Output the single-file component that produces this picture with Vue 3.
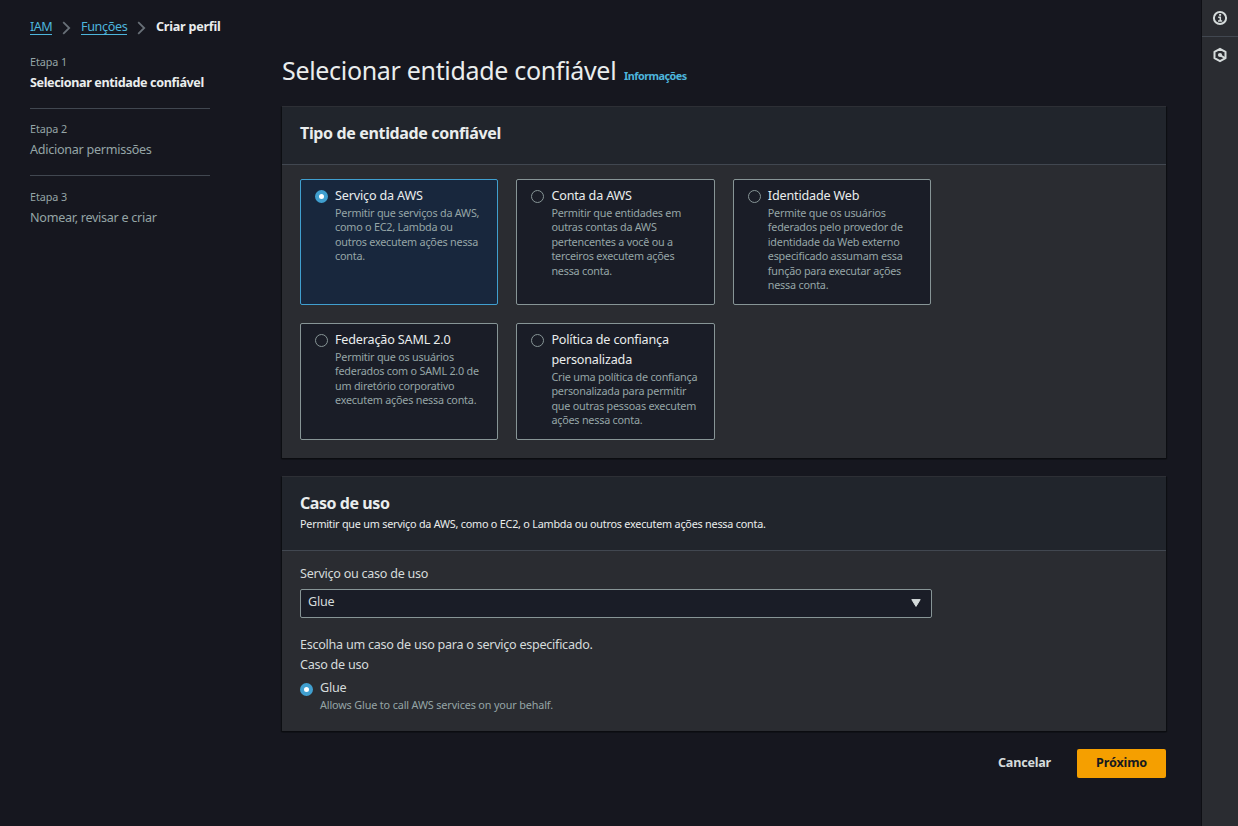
<script setup>
import { ref } from 'vue'

const steps = [
  { n: 'Etapa 1', title: 'Selecionar entidade confiável', active: true },
  { n: 'Etapa 2', title: 'Adicionar permissões' },
  { n: 'Etapa 3', title: 'Nomear, revisar e criar' }
]
const selected = ref(0)
const tiles = [
  { title: ['Serviço da AWS'], lines: ['Permitir que serviços da AWS,', 'como o EC2, Lambda ou', 'outros executem ações nessa', 'conta.'] },
  { title: ['Conta da AWS'], lines: ['Permitir que entidades em', 'outras contas da AWS', 'pertencentes a você ou a', 'terceiros executem ações', 'nessa conta.'] },
  { title: ['Identidade Web'], lines: ['Permite que os usuários', 'federados pelo provedor de', 'identidade da Web externo', 'especificado assumam essa', 'função para executar ações', 'nessa conta.'] },
  { title: ['Federação SAML 2.0'], lines: ['Permitir que os usuários', 'federados com o SAML 2.0 de', 'um diretório corporativo', 'executem ações nessa conta.'] },
  { title: ['Política de confiança', 'personalizada'], lines: ['Crie uma política de confiança', 'personalizada para permitir', 'que outras pessoas executem', 'ações nessa conta.'] }
]
</script>

<template>
  <div class="page">
    <div class="left">
      <nav class="crumbs">
        <a class="iam">IAM</a>
        <svg class="chev" width="10" height="14" viewBox="0 0 10 14"><path d="M1.2 1.2 L7.2 7 L1.2 12.8" /></svg>
        <a class="func">Funções</a>
        <svg class="chev" width="10" height="14" viewBox="0 0 10 14"><path d="M1.2 1.2 L7.2 7 L1.2 12.8" /></svg>
        <b>Criar perfil</b>
      </nav>
      <ol class="steps">
        <li v-for="s in steps" :key="s.n" :class="{ active: s.active }">
          <small>{{ s.n }}</small>
          <span>{{ s.title }}</span>
        </li>
      </ol>
    </div>

    <main class="main">
      <header class="title">
        <h1>Selecionar entidade confiável</h1>
        <a class="info">Informações</a>
      </header>

      <section class="box first">
        <div class="head"><h2>Tipo de entidade confiável</h2></div>
        <div class="tiles">
          <div v-for="(t, i) in tiles" :key="i" class="tile" :class="{ on: selected === i }" @click="selected = i">
            <i class="radio" :class="{ checked: selected === i }"></i>
            <div>
              <div v-for="l in t.title" :key="l" class="tt">{{ l }}</div>
              <div v-for="l in t.lines" :key="l" class="td">{{ l }}</div>
            </div>
          </div>
        </div>
      </section>

      <section class="box second">
        <div class="head">
          <h2 class="use">Caso de uso</h2>
          <p class="sub">Permitir que um serviço da AWS, como o EC2, o Lambda ou outros executem ações nessa conta.</p>
        </div>
        <div class="form">
          <div class="txt">Serviço ou caso de uso</div>
          <div class="select">
            <span>Glue</span>
            <svg width="10" height="8" viewBox="0 0 10 8"><path d="M0.8 0.6 H9.2 L5 7.4 Z" fill="#d5dbdb" stroke="#d5dbdb" stroke-linejoin="round" /></svg>
          </div>
          <div class="txt choose">Escolha um caso de uso para o serviço especificado.</div>
          <div class="txt">Caso de uso</div>
          <div class="option">
            <i class="radio checked"></i>
            <div>
              <div class="txt">Glue</div>
              <div class="od">Allows Glue to call AWS services on your behalf.</div>
            </div>
          </div>
        </div>
      </section>

      <footer class="actions">
        <button class="cancel">Cancelar</button>
        <button class="next">Próximo</button>
      </footer>
    </main>

    <aside class="rail">
      <div class="cell">
        <svg width="16" height="16" viewBox="0 0 16 16" fill="none" stroke="#d5dbdb">
          <circle cx="8" cy="8" r="6.1" stroke-width="2" />
          <path d="M6.2 7.2 H8.3 V11 M6 11.1 H10.2" stroke-width="1.5" />
          <rect x="7.1" y="4" width="2" height="1.8" fill="#d5dbdb" stroke="none" />
        </svg>
      </div>
      <div class="cell second-cell">
        <svg width="16" height="16" viewBox="0 0 16 16" fill="none" stroke="#d5dbdb">
          <path d="M8 1.8 L13.5 4.8 V11.2 L8 14.2 L2.5 11.2 V4.8 Z" stroke-width="2" stroke-linejoin="round" />
          <circle cx="8" cy="8" r="2.1" fill="#d5dbdb" stroke="none" />
          <path d="M8.3 8.3 L13 11" stroke-width="2" />
        </svg>
      </div>
    </aside>
  </div>
</template>

<style>
body { background: #16171f; }
</style>

<style scoped>
* { box-sizing: border-box; }
.page {
  display: grid;
  grid-template-columns: 282px 884px 35px 37px;
  height: 826px;
  overflow: hidden;
  background: #16171f;
  color: #d5dbdb;
  font: 12.6px/20px "Noto Sans", sans-serif;
  letter-spacing: -0.27px;
}
.left { padding: 17px 0 0 30px; }
.crumbs { display: flex; height: 20px; align-items: flex-start; white-space: nowrap; }
.crumbs a { color: #4db5dc; height: 18px; line-height: 20px; border-bottom: 1px solid #4db5dc; }
.iam { width: 22px; letter-spacing: -0.58px; }
.func { width: 46px; letter-spacing: -0.36px; }
.crumbs b { color: #eaeded; letter-spacing: -0.25px; }
.chev { margin: 4px 9px 0 10px; flex: none; }
.chev path { fill: none; stroke: #687078; stroke-width: 1.8; }
.steps { list-style: none; margin: 17px 0 0; padding: 0; width: 180px; }
.steps li { display: flex; flex-direction: column; padding-bottom: 15px; border-bottom: 1px solid #414750; margin-bottom: 12px; color: #95a5a6; white-space: nowrap; }
.steps li:nth-child(2) { margin-bottom: 13px; }
.steps li:last-child { border: 0; }
.steps small { font-size: 10.8px; line-height: 16px; letter-spacing: -0.09px; margin-bottom: 3px; }
.steps span { letter-spacing: -0.28px; }
.steps .active span { color: #eaeded; font-weight: 700; letter-spacing: -0.38px; }

.main { padding-top: 53px; }
.title { display: flex; align-items: baseline; height: 53px; white-space: nowrap; }
h1 { margin: 0; font-size: 25px; line-height: 34px; font-weight: 400; letter-spacing: -0.32px; width: 342px; color: #eaeded; }
.info { color: #4db5dc; font-size: 10.8px; font-weight: 700; letter-spacing: -0.49px; }
.box { background: #2a2c31; box-shadow: 0 1px 1px #0b0c10, 1px 1px 1px #0e0f14, -1px 1px 1px #0e0f14; border-top: 1px solid #2d2f35; }
.first { height: 352px; margin-bottom: 18px; }
.second { height: 255px; }
.head { background: #21252c; border-bottom: 1px solid #414750; padding: 15px 18px 0; height: 58px; }
.second .head { height: 74px; }
h2 { margin: 0; font-size: 16px; line-height: 22px; font-weight: 700; letter-spacing: -0.35px; color: #eaeded; }
.use { letter-spacing: -0.44px; }
.sub { margin: 2px 0 0; font-size: 10.8px; line-height: 16px; letter-spacing: -0.22px; white-space: nowrap; color: #eaeded; }
.tiles { padding: 14px 18px 0; display: grid; grid-template-columns: 198.4px 198.4px 198.4px; grid-template-rows: 126px 117px; gap: 18px; }
.tile { display: flex; gap: 7px; padding: 6px 0 0 14px; border: 1px solid #879596; border-radius: 2px; background: #1a1d27; white-space: nowrap; }
.tile.on { border-color: #409fcf; background: #18273d; }
.tt { letter-spacing: -0.17px; color: #eaeded; }
.td, .od { font-size: 10.8px; line-height: 14.4px; letter-spacing: -0.22px; color: #95a5a6; }
.radio { flex: none; width: 13px; height: 13px; margin-top: 5px; border: 1px solid #879596; border-radius: 50%; }
.tile .radio { margin-top: 4px; }
.radio.checked { border: 4px solid #409fcf; background: #fff; }
.form { padding: 13px 18px 0; }
.select { display: flex; justify-content: space-between; align-items: center; width: 632px; height: 29px; margin-top: 5px; padding: 0 10px 0 7px; border: 1px solid #879596; border-radius: 2px; background: #1a1d27; }
.select span { margin-top: -3px; }
.select svg { margin-top: -1px; }
.choose { margin-top: 17px; }
.option { display: flex; gap: 7px; margin-top: 3px; }
.od { letter-spacing: -0.135px; }
.actions { display: flex; justify-content: flex-end; margin-top: 18px; }
button { height: 29px; padding: 0 0 2px; border: 0; border-radius: 2px; font: 700 12.6px "Noto Sans", sans-serif; }
.cancel { width: 105px; background: none; color: #d5dbdb; letter-spacing: -0.22px; }
.next { width: 89px; background: #f59f00; color: #16191f; letter-spacing: -0.15px; }
.rail { grid-column: 4; background: #2a2c31; border-left: 1px solid #0e0f14; }
.cell { height: 37px; padding: 10px 0 0 10px; border-bottom: 1px solid #414750; }
.second-cell { border: 0; }
</style>
